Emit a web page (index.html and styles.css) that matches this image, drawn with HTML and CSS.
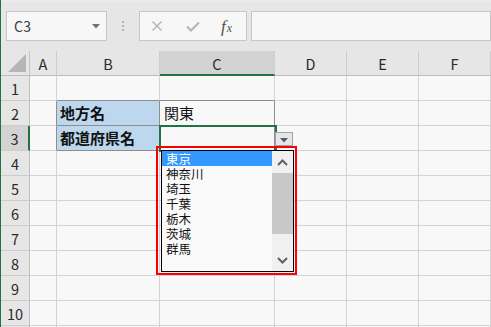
FILE: index.html
```html
<!DOCTYPE html>
<html lang="ja">
<head>
<meta charset="utf-8">
<link rel="stylesheet" href="styles.css">
</head>
<body>
<div class="app">
  <div class="toolbar">
    <div class="namebox">
      <span class="ref">C3</span>
      <svg class="caret" width="8" height="5" viewBox="0 0 8 5"><polygon points="0,0 8,0 4,4.5" fill="#707070"/></svg>
    </div>
    <div class="grip"><i></i><i></i><i></i></div>
    <div class="fxbox">
      <svg class="ico-x" width="12" height="12" viewBox="0 0 12 12"><path d="M1.5 1.5 L10.5 10.5 M10.5 1.5 L1.5 10.5" stroke="#b3b3b3" stroke-width="1.4" fill="none"/></svg>
      <svg class="ico-check" width="14" height="11" viewBox="0 0 14 11"><path d="M1 5.5 L5 9.5 L13 1.5" stroke="#b3b3b3" stroke-width="2" fill="none"/></svg>
      <span class="fx">f<span class="fx-x">x</span></span>
    </div>
    <div class="formula"></div>
  </div>

  <div class="sheet">
    <div class="hd corner"><svg width="18" height="18" viewBox="0 0 18 18"><polygon points="18,0 18,18 0,18" fill="#b5b5b5"/></svg></div>
    <div class="hd col">A</div>
    <div class="hd col">B</div>
    <div class="hd col sel">C</div>
    <div class="hd col">D</div>
    <div class="hd col">E</div>
    <div class="hd col">F</div>

    <div class="hd row">1</div>
    <div class="c"></div><div class="c tb-top"></div><div class="c tb-top"></div><div class="c"></div><div class="c"></div><div class="c"></div>

    <div class="hd row">2</div>
    <div class="c tb-left"></div><div class="c label tb">地方名</div><div class="c val tb">関東</div><div class="c"></div><div class="c"></div><div class="c"></div>

    <div class="hd row sel">3</div>
    <div class="c tb-left"></div><div class="c label tb">都道府県名</div><div class="c val tb"></div><div class="c"></div><div class="c"></div><div class="c"></div>

    <div class="hd row">4</div>
    <div class="c"></div><div class="c"></div><div class="c"></div><div class="c"></div><div class="c"></div><div class="c"></div>
    <div class="hd row">5</div>
    <div class="c"></div><div class="c"></div><div class="c"></div><div class="c"></div><div class="c"></div><div class="c"></div>
    <div class="hd row">6</div>
    <div class="c"></div><div class="c"></div><div class="c"></div><div class="c"></div><div class="c"></div><div class="c"></div>
    <div class="hd row">7</div>
    <div class="c"></div><div class="c"></div><div class="c"></div><div class="c"></div><div class="c"></div><div class="c"></div>
    <div class="hd row">8</div>
    <div class="c"></div><div class="c"></div><div class="c"></div><div class="c"></div><div class="c"></div><div class="c"></div>
    <div class="hd row">9</div>
    <div class="c"></div><div class="c"></div><div class="c"></div><div class="c"></div><div class="c"></div><div class="c"></div>
    <div class="hd row">10</div>
    <div class="c"></div><div class="c"></div><div class="c"></div><div class="c"></div><div class="c"></div><div class="c"></div>
    <div class="hd row"></div>
    <div class="c"></div><div class="c"></div><div class="c"></div><div class="c"></div><div class="c"></div><div class="c"></div>
  </div>

  <div class="selection"></div>
  <div class="fill-handle"></div>
  <div class="dd-btn"><svg width="8" height="5" viewBox="0 0 8 5"><polygon points="0,0 8,0 4,4.5" fill="#5a5a5a"/></svg></div>

  <div class="highlight-box">
    <div class="listbox">
      <ul class="items">
        <li class="active">東京</li>
        <li>神奈川</li>
        <li>埼玉</li>
        <li>千葉</li>
        <li>栃木</li>
        <li>茨城</li>
        <li>群馬</li>
      </ul>
      <div class="scrollbar">
        <div class="sb-btn"><svg width="11" height="7" viewBox="0 0 11 7"><polyline points="1,6 5.5,1.5 10,6" fill="none" stroke="#606060" stroke-width="2"/></svg></div>
        <div class="sb-thumb"></div>
        <div class="sb-track"></div>
        <div class="sb-btn"><svg width="11" height="7" viewBox="0 0 11 7"><polyline points="1,1 5.5,5.5 10,1" fill="none" stroke="#606060" stroke-width="2"/></svg></div>
      </div>
    </div>
  </div>
</div>
</body>
</html>
```

FILE: styles.css
```css
* { box-sizing: border-box; }

html, body {
  margin: 0;
  padding: 0;
  background: #e6e6e6;
}

body {
  font-family: "Noto Sans CJK JP", "Noto Sans", sans-serif;
  color: #222;
}

.app {
  position: relative;
  width: 491px;
  height: 327px;
  overflow: hidden;
  border-left: 1px solid #217346;
  background: #e6e6e6;
}

/* ---------- toolbar ---------- */
.toolbar {
  height: 51px;
  display: flex;
  align-items: flex-start;
  border-top: 2px solid #ebebeb;
  padding-top: 9px;
}

.namebox {
  margin-left: 5px;
  width: 101px;
  height: 30px;
  border: 1px solid #c6c6c6;
  background: #f7f7f7;
  display: flex;
  align-items: center;
  justify-content: space-between;
  padding: 0 6px 0 7px;
}

.ref {
  font-size: 14px;
  color: #3a3a3a;
  letter-spacing: 0.3px;
}

.caret { margin-top: 1px; }

.grip {
  width: 32px;
  height: 30px;
  display: flex;
  flex-direction: column;
  align-items: center;
  justify-content: center;
  gap: 2px;
}

.grip i {
  display: block;
  width: 2px;
  height: 2px;
  background: #b5b5b5;
}

.fxbox {
  width: 108px;
  height: 30px;
  border: 1px solid #c6c6c6;
  background: #f7f7f7;
  display: flex;
  align-items: center;
  padding-left: 11px;
}

.ico-x { margin-right: 23px; }
.ico-check { margin-right: 21px; margin-top: 1px; }

.fx {
  font-family: "Liberation Serif", serif;
  font-style: italic;
  font-size: 17px;
  color: #505050;
  line-height: 1;
  display: flex;
  align-items: baseline;
}

.fx-x {
  font-size: 12px;
  margin-left: 1px;
}

.formula {
  flex: 1;
  margin-left: 4px;
  height: 30px;
  border: 1px solid #c6c6c6;
  background: #f7f7f7;
}

/* ---------- sheet ---------- */
.sheet {
  display: grid;
  grid-template-columns: 29px 27px 103px 115px 72px 72px 72px;
  grid-auto-rows: 25px;
  background: #f8f8f8;
}

.hd {
  background: #e6e6e6;
  display: flex;
  align-items: center;
  justify-content: center;
  font-size: 14.5px;
  color: #2a2a2a;
}

.corner {
  border-right: 1px solid #c4c4c4;
  border-bottom: 1px solid #bdbdbd;
  justify-content: flex-end;
  align-items: flex-end;
  padding: 0 3px 3px 0;
}

.col {
  border-right: 1px solid #cdcdcd;
  border-bottom: 1px solid #bdbdbd;
  padding-top: 1px;
}

.col.sel {
  background: #d3d3d3;
  border-bottom: 2px solid #217346;
}

.row {
  border-right: 1px solid #bdbdbd;
  border-bottom: 1px solid #cdcdcd;
}

.row.sel {
  background: #d3d3d3;
  border-right: 2px solid #217346;
}

.c {
  background: #f8f8f8;
  border-right: 1px solid #d4d4d4;
  border-bottom: 1px solid #d4d4d4;
  font-size: 15px;
  line-height: 24px;
  color: #111;
  white-space: nowrap;
}

.tb-top { border-bottom-color: #8e8e8e; }
.tb-left { border-right-color: #8e8e8e; }
.tb { border-right-color: #8e8e8e; border-bottom-color: #8e8e8e; }

.label {
  background: #bdd7ee;
  font-weight: bold;
  padding-left: 3px;
}

.val {
  padding-left: 4px;
}

/* ---------- overlays ---------- */
.selection {
  position: absolute;
  left: 158px;
  top: 125px;
  width: 118px;
  height: 27px;
  border: 2px solid #217346;
}

.fill-handle {
  position: absolute;
  left: 272px;
  top: 147px;
  width: 5px;
  height: 5px;
  background: #217346;
  border: 1px solid #f8f8f8;
}

.dd-btn {
  position: absolute;
  left: 274px;
  top: 132px;
  width: 18px;
  height: 14px;
  border: 1px solid #a3a3a3;
  background: #e3e6ea;
  display: flex;
  align-items: center;
  justify-content: center;
  padding-top: 2px;
}

.highlight-box {
  position: absolute;
  left: 155px;
  top: 146px;
  width: 141px;
  height: 129px;
  border: 2px solid #ff0000;
  padding: 2px 1px 1px 3px;
}

.listbox {
  width: 100%;
  height: 100%;
  border: 1px solid #000;
  background: #f9f9f9;
  display: flex;
}

.items {
  list-style: none;
  margin: 0;
  padding: 0;
  flex: 1;
}

.items li {
  height: 15px;
  line-height: 15px;
  font-size: 12.5px;
  padding-left: 4px;
  color: #111;
}

.items li.active {
  background: #3399ff;
  color: #fff;
}

.scrollbar {
  width: 21px;
  background: #f0f0f0;
  display: flex;
  flex-direction: column;
}

.sb-btn {
  height: 22px;
  display: flex;
  align-items: center;
  justify-content: center;
}

.sb-thumb {
  height: 61px;
  background: #c8c8c8;
}

.sb-track { flex: 1; }
```
